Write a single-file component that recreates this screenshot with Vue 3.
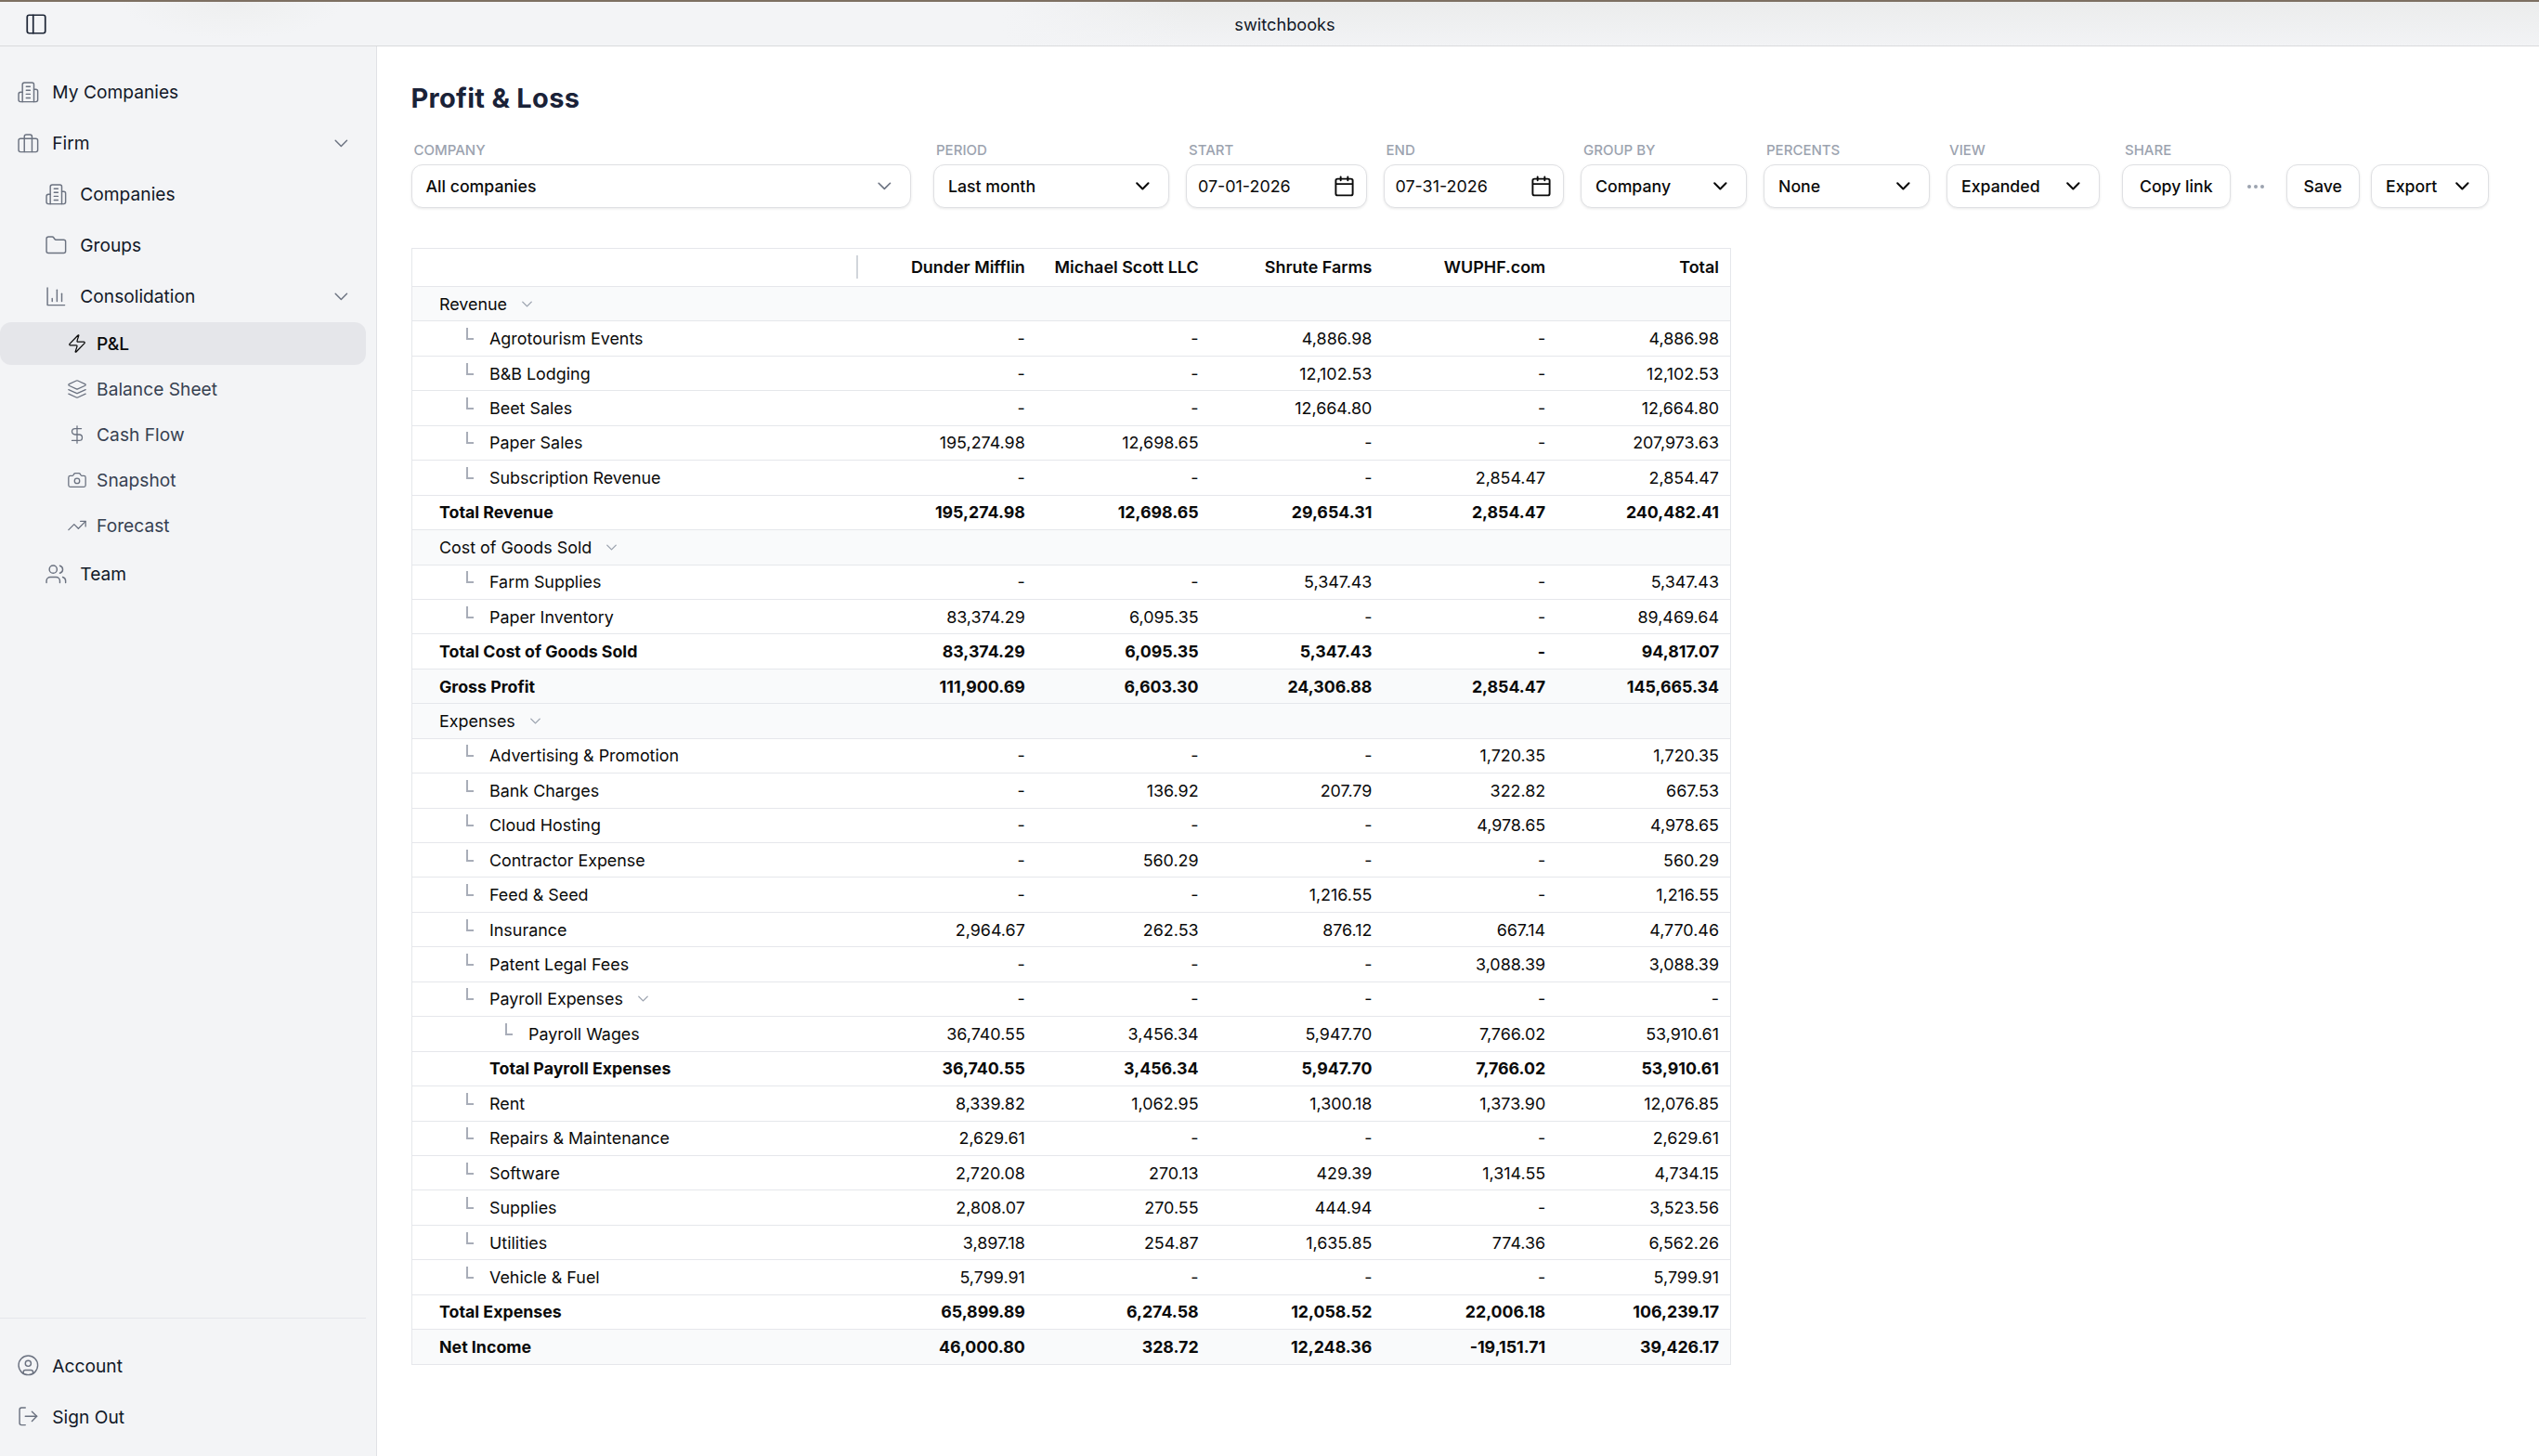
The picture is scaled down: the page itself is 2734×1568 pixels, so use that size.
<template>
  <div class="app">
    <header class="topbar">
      <svg class="panelIcon" viewBox="0 0 24 24"><rect x="3" y="3" width="18" height="18" rx="2" /><path d="M9 3v18" /></svg>
      <span class="brand">switchbooks</span>
    </header>

    <div class="body">
      <aside class="sidebar">
        <nav class="nav">
          <a
            v-for="item in navItems"
            :key="item.label"
            class="navItem"
            :class="['level' + item.level, { active: item.active }]"
          >
            <svg class="icon" viewBox="0 0 24 24"><path v-for="d in icons[item.icon]" :key="d" :d="d" /></svg>
            <span>{{ item.label }}</span>
            <svg v-if="item.open" class="icon chevron" viewBox="0 0 24 24"><path d="m6 9 6 6 6-6" /></svg>
          </a>
        </nav>
        <nav class="navBottom">
          <a v-for="item in accountItems" :key="item.label" class="navItem level0">
            <svg class="icon" viewBox="0 0 24 24"><path v-for="d in icons[item.icon]" :key="d" :d="d" /></svg>
            <span>{{ item.label }}</span>
          </a>
        </nav>
      </aside>

      <main class="main">
        <h1 class="title">Profit &amp; Loss</h1>

        <div class="filters">
          <div v-for="f in filters" :key="f.name" class="field" :class="f.name">
            <label class="label">{{ f.label }}</label>
            <button class="control">
              <span>{{ f.value }}</span>
              <svg v-if="f.type === 'date'" class="calendar" viewBox="0 0 24 24">
                <path d="M8 1.5v4M16 1.5v4M3.5 9.5h17" />
                <rect x="2.5" y="3.8" width="19" height="18.5" rx="2" />
              </svg>
              <svg v-if="f.type === 'select'" class="caret" viewBox="0 0 24 24"><path d="m6 9 6 6 6-6" /></svg>
            </button>
          </div>
          <button class="more">
            <svg viewBox="0 0 20 6"><circle cx="3" cy="3" r="2" /><circle cx="10" cy="3" r="2" /><circle cx="17" cy="3" r="2" /></svg>
          </button>
          <button class="control save">Save</button>
          <button class="control export">
            <span>Export</span>
            <svg class="caret" viewBox="0 0 24 24"><path d="m6 9 6 6 6-6" /></svg>
          </button>
        </div>

        <div class="report">
          <div class="row head">
            <div class="name"><span class="resizer"></span></div>
            <div v-for="c in columns" :key="c" class="cell">{{ c }}</div>
          </div>
          <div v-for="r in rows" :key="r.name" class="row" :class="r.kind">
            <div class="name" :class="'indent' + r.indent">
              <span v-if="r.indent && r.kind !== 'total'" class="branch"></span>
              <span>{{ r.name }}</span>
              <svg v-if="r.open" class="toggle" viewBox="0 0 24 24"><path d="m6 9 6 6 6-6" /></svg>
            </div>
            <div v-for="(v, i) in r.values" :key="i" class="cell">{{ v }}</div>
          </div>
        </div>
      </main>
    </div>
  </div>
</template>

<script setup>
const icons = {
  building: [
    "M6 22V4a2 2 0 0 1 2-2h8a2 2 0 0 1 2 2v18Z",
    "M6 12H4a2 2 0 0 0-2 2v6a2 2 0 0 0 2 2h2",
    "M18 9h2a2 2 0 0 1 2 2v9a2 2 0 0 1-2 2h-2",
    "M10 6h4M10 10h4M10 14h4M10 18h4",
  ],
  briefcase: [
    "M4 7h16a2 2 0 0 1 2 2v10a2 2 0 0 1-2 2H4a2 2 0 0 1-2-2V9a2 2 0 0 1 2-2Z",
    "M16 21V5a2 2 0 0 0-2-2h-4a2 2 0 0 0-2 2v16",
  ],
  folder: [
    "M20 20a2 2 0 0 0 2-2V8a2 2 0 0 0-2-2h-7.9a2 2 0 0 1-1.69-.9L9.6 3.9A2 2 0 0 0 7.93 3H4a2 2 0 0 0-2 2v13a2 2 0 0 0 2 2Z",
  ],
  chart: ["M3 3v18h18", "M18 17V9", "M13 17V5", "M8 17v-3"],
  zap: [
    "M4 14a1 1 0 0 1-.78-1.63l9.9-10.2a.5.5 0 0 1 .86.46l-1.92 6.02A1 1 0 0 0 13 10h7a1 1 0 0 1 .78 1.63l-9.9 10.2a.5.5 0 0 1-.86-.46l1.92-6.02A1 1 0 0 0 11 14z",
  ],
  layers: [
    "m12.83 2.18a2 2 0 0 0-1.66 0L2.6 6.08a1 1 0 0 0 0 1.83l8.58 3.91a2 2 0 0 0 1.66 0l8.58-3.9a1 1 0 0 0 0-1.83Z",
    "m22 17.65-9.17 4.16a2 2 0 0 1-1.66 0L2 17.65",
    "m22 12.65-9.17 4.16a2 2 0 0 1-1.66 0L2 12.65",
  ],
  dollar: ["M12 2v20", "M17 5H9.5a3.5 3.5 0 0 0 0 7h5a3.5 3.5 0 0 1 0 7H6"],
  camera: [
    "M13.997 4a2 2 0 0 1 1.76 1.05l.486.9A2 2 0 0 0 18.003 7H20a2 2 0 0 1 2 2v9a2 2 0 0 1-2 2H4a2 2 0 0 1-2-2V9a2 2 0 0 1 2-2h1.997a2 2 0 0 0 1.759-1.048l.489-.904A2 2 0 0 1 10.004 4z",
    "M15 13a3 3 0 1 1-6 0a3 3 0 1 1 6 0",
  ],
  trending: ["M16 7h6v6", "m22 7-8.5 8.5-5-5L2 17"],
  users: [
    "M16 21v-2a4 4 0 0 0-4-4H6a4 4 0 0 0-4 4v2",
    "M13 7a4 4 0 1 1-8 0a4 4 0 1 1 8 0",
    "M22 21v-2a4 4 0 0 0-3-3.87",
    "M16 3.13a4 4 0 0 1 0 7.75",
  ],
  account: [
    "M22 12a10 10 0 1 1-20 0a10 10 0 1 1 20 0",
    "M15 10a3 3 0 1 1-6 0a3 3 0 1 1 6 0",
    "M7 20.66V19a2 2 0 0 1 2-2h6a2 2 0 0 1 2 2v1.66",
  ],
  logout: ["M9 21H5a2 2 0 0 1-2-2V5a2 2 0 0 1 2-2h4", "m16 17 5-5-5-5", "M21 12H9"],
};

const navItems = [
  { label: "My Companies", icon: "building", level: 0 },
  { label: "Firm", icon: "briefcase", level: 0, open: true },
  { label: "Companies", icon: "building", level: 1 },
  { label: "Groups", icon: "folder", level: 1 },
  { label: "Consolidation", icon: "chart", level: 1, open: true },
  { label: "P&L", icon: "zap", level: 2, active: true },
  { label: "Balance Sheet", icon: "layers", level: 2 },
  { label: "Cash Flow", icon: "dollar", level: 2 },
  { label: "Snapshot", icon: "camera", level: 2 },
  { label: "Forecast", icon: "trending", level: 2 },
  { label: "Team", icon: "users", level: 1 },
];

const accountItems = [
  { label: "Account", icon: "account" },
  { label: "Sign Out", icon: "logout" },
];

const filters = [
  { name: "company", label: "COMPANY", value: "All companies", type: "select" },
  { name: "period", label: "PERIOD", value: "Last month", type: "select" },
  { name: "start", label: "START", value: "07-01-2026", type: "date" },
  { name: "end", label: "END", value: "07-31-2026", type: "date" },
  { name: "group", label: "GROUP BY", value: "Company", type: "select" },
  { name: "percents", label: "PERCENTS", value: "None", type: "select" },
  { name: "view", label: "VIEW", value: "Expanded", type: "select" },
  { name: "share", label: "SHARE", value: "Copy link", type: "button" },
];

const columns = ["Dunder Mifflin", "Michael Scott LLC", "Shrute Farms", "WUPHF.com", "Total"];

function section(name) {
  return { name, kind: "section", indent: 0, open: true, values: [] };
}
function line(name, values, indent = 1, open = false) {
  return { name, kind: "line", indent, open, values: values.split(" ") };
}
function total(name, values, indent = 0) {
  return { name, kind: "total", indent, values: values.split(" ") };
}
function summary(name, values) {
  return { name, kind: "summary", indent: 0, values: values.split(" ") };
}

const rows = [
  section("Revenue"),
  line("Agrotourism Events", "- - 4,886.98 - 4,886.98"),
  line("B&B Lodging", "- - 12,102.53 - 12,102.53"),
  line("Beet Sales", "- - 12,664.80 - 12,664.80"),
  line("Paper Sales", "195,274.98 12,698.65 - - 207,973.63"),
  line("Subscription Revenue", "- - - 2,854.47 2,854.47"),
  total("Total Revenue", "195,274.98 12,698.65 29,654.31 2,854.47 240,482.41"),
  section("Cost of Goods Sold"),
  line("Farm Supplies", "- - 5,347.43 - 5,347.43"),
  line("Paper Inventory", "83,374.29 6,095.35 - - 89,469.64"),
  total("Total Cost of Goods Sold", "83,374.29 6,095.35 5,347.43 - 94,817.07"),
  summary("Gross Profit", "111,900.69 6,603.30 24,306.88 2,854.47 145,665.34"),
  section("Expenses"),
  line("Advertising & Promotion", "- - - 1,720.35 1,720.35"),
  line("Bank Charges", "- 136.92 207.79 322.82 667.53"),
  line("Cloud Hosting", "- - - 4,978.65 4,978.65"),
  line("Contractor Expense", "- 560.29 - - 560.29"),
  line("Feed & Seed", "- - 1,216.55 - 1,216.55"),
  line("Insurance", "2,964.67 262.53 876.12 667.14 4,770.46"),
  line("Patent Legal Fees", "- - - 3,088.39 3,088.39"),
  line("Payroll Expenses", "- - - - -", 1, true),
  line("Payroll Wages", "36,740.55 3,456.34 5,947.70 7,766.02 53,910.61", 2),
  total("Total Payroll Expenses", "36,740.55 3,456.34 5,947.70 7,766.02 53,910.61", 1),
  line("Rent", "8,339.82 1,062.95 1,300.18 1,373.90 12,076.85"),
  line("Repairs & Maintenance", "2,629.61 - - - 2,629.61"),
  line("Software", "2,720.08 270.13 429.39 1,314.55 4,734.15"),
  line("Supplies", "2,808.07 270.55 444.94 - 3,523.56"),
  line("Utilities", "3,897.18 254.87 1,635.85 774.36 6,562.26"),
  line("Vehicle & Fuel", "5,799.91 - - - 5,799.91"),
  total("Total Expenses", "65,899.89 6,274.58 12,058.52 22,006.18 106,239.17"),
  summary("Net Income", "46,000.80 328.72 12,248.36 -19,151.71 39,426.17"),
];
</script>

<style>
body {
  margin: 0;
  background: #ffffff;
}
</style>

<style scoped>
.app {
  width: 2734px;
  height: 1568px;
  display: flex;
  flex-direction: column;
  overflow: hidden;
  font-family: Inter, "Liberation Sans", sans-serif;
  font-size: 17.9px;
  color: #0a0a0a;
}
.app *,
.app {
  box-sizing: border-box;
}
svg {
  fill: none;
  stroke: currentColor;
  stroke-linecap: round;
  stroke-linejoin: round;
  flex-shrink: 0;
}
button {
  font: inherit;
  color: inherit;
}

.topbar {
  height: 50px;
  flex-shrink: 0;
  display: grid;
  grid-template-columns: 1fr auto 1fr;
  align-items: center;
  padding-left: 33px;
  border-top: 2px solid #7d7062;
  border-bottom: 1px solid #d9dadc;
  background:
    radial-gradient(ellipse 120px 40px at 250px 0, #eeefef, transparent),
    linear-gradient(90deg, #f3f4f6 1080px, transparent 1280px),
    linear-gradient(180deg, #ebecec, #f2f3f5);
}
.panelIcon {
  width: 26px;
  height: 26px;
  margin-left: -7px;
  color: #1e2636;
  stroke-width: 1.6;
}
.brand {
  font-size: 18.2px;
  color: #111827;
}

.body {
  flex: 1;
  display: flex;
  min-height: 0;
}
.sidebar {
  width: 406px;
  flex-shrink: 0;
  display: flex;
  flex-direction: column;
  justify-content: space-between;
  padding-right: 11px;
  background: #f3f4f6;
  border-right: 1px solid #e0e2e6;
}
.nav {
  padding-top: 22px;
}
.navItem {
  height: 54.9px;
  display: flex;
  align-items: center;
  gap: 14px;
  padding: 0 14px 0 17.6px;
  font-size: 19.2px;
  color: #111827;
}
.icon {
  width: 24.7px;
  height: 24.7px;
  stroke-width: 1.4;
  color: #6b7280;
}
.chevron {
  margin-left: auto;
}
.level1 {
  padding-left: 47.6px;
}
.level2 {
  height: 46px;
  margin-bottom: 3px;
  gap: 10.5px;
  padding-left: 71.6px;
  color: #374151;
}
.level2 .icon {
  width: 22px;
  height: 22px;
}
.level2.active {
  margin-top: 1px;
  border-radius: 12px;
  background: #e5e6ea;
  font-weight: 500;
  color: #0a0a0a;
}
.level2.active .icon {
  color: #0a0a0a;
}
.level2 + .level1 {
  margin-top: -2px;
}
.navBottom {
  border-top: 1px solid #e5e7eb;
  padding: 23px 0 15px;
}

.main {
  flex: 1;
  padding: 36px 0 0 36.5px;
}
.title {
  margin: 0;
  font-size: 29px;
  line-height: 40px;
  font-weight: 700;
  letter-spacing: 0.3px;
  color: #1a2238;
}
.filters {
  display: flex;
  align-items: flex-end;
  margin-top: 27px;
}
.field {
  margin-right: 18px;
}
.label {
  display: block;
  padding-left: 3px;
  margin-bottom: 6px;
  font-size: 15px;
  line-height: 18px;
  font-weight: 500;
  color: #9ca3af;
}
.control {
  width: 100%;
  height: 47px;
  display: flex;
  align-items: center;
  justify-content: space-between;
  padding: 0 15px;
  border: 1px solid #dfe0e3;
  border-radius: 12px;
  background: #ffffff;
  box-shadow: 0 1px 3px rgba(0, 0, 0, 0.09);
  font-size: 17.7px;
  font-weight: 500;
}
.caret {
  width: 24.7px;
  height: 24.7px;
  stroke-width: 2;
}
.calendar {
  width: 23px;
  height: 23px;
  stroke-width: 2;
}
.company {
  width: 538px;
  margin-right: 24.5px;
}
.company .caret {
  color: #6b7280;
  stroke-width: 1.6;
}
.period {
  width: 254px;
}
.start,
.end {
  width: 194.5px;
}
.start .control,
.end .control {
  padding: 0 12px;
  font-size: 17.9px;
  font-weight: 400;
}
.group {
  width: 179px;
}
.percents {
  width: 179px;
}
.view {
  width: 164.5px;
  margin-right: 24.5px;
}
.share {
  width: 116.5px;
}
.share .control,
.save {
  justify-content: center;
}
.more {
  width: 18px;
  height: 47px;
  margin-right: 24px;
  padding: 0;
  border: 0;
  background: none;
}
.more svg {
  width: 20px;
  height: 6px;
  display: block;
  margin-left: -1px;
  fill: #9ca3af;
  stroke: none;
}
.save {
  width: 79.5px;
  margin-right: 12px;
}
.export {
  width: 127px;
}

.report {
  width: 1421px;
  margin-top: 43px;
  border: 1px solid #e5e7eb;
  border-bottom: 0;
}
.row {
  height: 37.44px;
  display: grid;
  grid-template-columns: 485px repeat(5, 186.8px);
  align-items: center;
  border-bottom: 1px solid #e5e7eb;
}
.head {
  height: 41px;
  padding-bottom: 2px;
  font-weight: 600;
}
.section,
.summary {
  background: #f9fafb;
}
.total,
.summary {
  font-weight: 700;
  font-size: 17.8px;
}
.name {
  display: flex;
  align-items: center;
  padding-left: 29.5px;
}
.indent1 {
  padding-left: 83.5px;
}
.indent2 {
  padding-left: 125.5px;
}
.branch {
  width: 8px;
  height: 13px;
  flex-shrink: 0;
  margin: -10px 17px 0 -25px;
  border-left: 2px solid #a8adb8;
  border-bottom: 2px solid #a8adb8;
}
.toggle {
  width: 19px;
  height: 19px;
  margin-left: 12px;
  stroke-width: 1.7;
  color: #9ca3af;
}
.resizer {
  width: 2px;
  height: 25px;
  margin-left: 449px;
  background: #d1d5db;
}
.cell {
  padding-right: 11.5px;
  text-align: right;
}
</style>
